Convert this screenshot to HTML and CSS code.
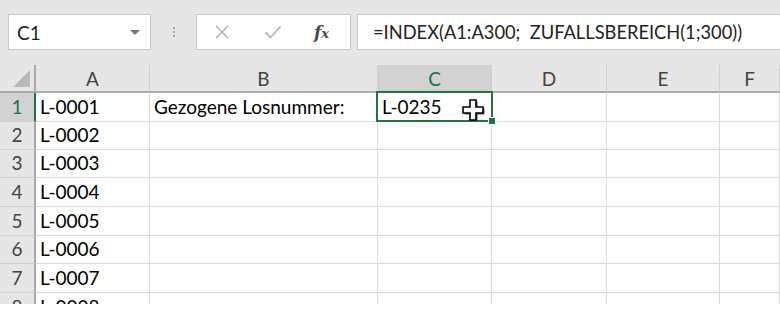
FILE: index.html
```html
<!DOCTYPE html>
<html lang="de">
<head>
    <meta charset="UTF-8">
    <title>Losnummer ziehen</title>
    <link rel="stylesheet" href="styles.css">
</head>
<body>
    <div class="formula-bar">
        <div class="name-box">
            <span>C1</span>
            <span class="dropdown"></span>
        </div>
        <div class="grip">
            <span></span><span></span><span></span>
        </div>
        <div class="fx-buttons">
            <svg class="icon" width="16" height="16" viewBox="0 0 16 16">
                <path d="M2 2 L14 14 M14 2 L2 14" stroke="#b3b3b3" stroke-width="1.6" fill="none"/>
            </svg>
            <svg class="icon" width="18" height="16" viewBox="0 0 18 16">
                <path d="M1.5 8.5 L6.5 13.5 L16.5 2.5" stroke="#b3b3b3" stroke-width="1.8" fill="none"/>
            </svg>
            <span class="fx">f<small>x</small></span>
        </div>
        <div class="formula-input">=INDEX(A1:A300;&nbsp; ZUFALLSBEREICH(1;300))</div>
    </div>

    <div class="sheet">
        <div class="corner"><span class="corner-tri"></span></div>
        <div class="col-head">A</div>
        <div class="col-head">B</div>
        <div class="col-head active">C</div>
        <div class="col-head">D</div>
        <div class="col-head">E</div>
        <div class="col-head">F</div>

        <div class="row-head active">1</div>
        <div class="cell">L-0001</div>
        <div class="cell">Gezogene Losnummer:</div>
        <div class="cell current">L-0235
            <div class="selection"><span class="fill-handle"></span></div>
            <svg class="cursor" width="26" height="26" viewBox="0 0 26 26">
                <path d="M10 3 H16 V10 H23 V16 H16 V23 H10 V16 H3 V10 H10 Z" fill="#555" transform="translate(1.5 1.5)"/>
                <path d="M10 3 H16 V10 H23 V16 H16 V23 H10 V16 H3 V10 H10 Z" fill="#fff" stroke="#000" stroke-width="1.6" stroke-linejoin="miter"/>
            </svg>
        </div>
        <div class="cell"></div>
        <div class="cell"></div>
        <div class="cell"></div>

        <div class="row-head">2</div>
        <div class="cell">L-0002</div>
        <div class="cell"></div><div class="cell"></div><div class="cell"></div><div class="cell"></div><div class="cell"></div>

        <div class="row-head">3</div>
        <div class="cell">L-0003</div>
        <div class="cell"></div><div class="cell"></div><div class="cell"></div><div class="cell"></div><div class="cell"></div>

        <div class="row-head">4</div>
        <div class="cell">L-0004</div>
        <div class="cell"></div><div class="cell"></div><div class="cell"></div><div class="cell"></div><div class="cell"></div>

        <div class="row-head">5</div>
        <div class="cell">L-0005</div>
        <div class="cell"></div><div class="cell"></div><div class="cell"></div><div class="cell"></div><div class="cell"></div>

        <div class="row-head">6</div>
        <div class="cell">L-0006</div>
        <div class="cell"></div><div class="cell"></div><div class="cell"></div><div class="cell"></div><div class="cell"></div>

        <div class="row-head">7</div>
        <div class="cell">L-0007</div>
        <div class="cell"></div><div class="cell"></div><div class="cell"></div><div class="cell"></div><div class="cell"></div>

        <div class="row-head">8</div>
        <div class="cell">L-0008</div>
        <div class="cell"></div><div class="cell"></div><div class="cell"></div><div class="cell"></div><div class="cell"></div>
    </div>
</body>
</html>
```

FILE: styles.css
```css
* {
    margin: 0;
    padding: 0;
    box-sizing: border-box;
}

body {
    background: #fff;
    font-family: Lato, "Open Sans", sans-serif;
    color: #000;
    width: 780px;
    overflow: hidden;
}

/* Formula bar */
.formula-bar {
    height: 65px;
    background: #e6e6e6;
    padding: 14px 0 0 8px;
    display: flex;
    align-items: flex-start;
}

.name-box {
    width: 143px;
    height: 36px;
    background: #fff;
    border: 1px solid #c6c6c6;
    display: flex;
    align-items: center;
    justify-content: space-between;
    padding: 0 10px 0 8px;
    font-size: 19px;
    color: #222;
}

.dropdown {
    width: 0;
    height: 0;
    border-left: 5px solid transparent;
    border-right: 5px solid transparent;
    border-top: 5px solid #777;
}

.grip {
    width: 45px;
    height: 36px;
    display: flex;
    flex-direction: column;
    align-items: center;
    justify-content: center;
    gap: 2px;
}

.grip span {
    width: 2px;
    height: 2px;
    background: #a6a6a6;
}

.fx-buttons {
    width: 155px;
    height: 36px;
    background: #fff;
    border: 1px solid #c6c6c6;
    display: flex;
    align-items: center;
    padding-left: 17px;
}

.fx-buttons .icon:nth-child(2) {
    margin-left: 34px;
}

.fx {
    margin-left: 32px;
    font-family: "DejaVu Serif", "Liberation Serif", serif;
    font-style: italic;
    font-weight: bold;
    font-size: 17px;
    color: #4a4a4a;
}

.fx small {
    font-size: 13px;
}

.formula-input {
    flex: 1;
    height: 36px;
    margin-left: 6px;
    background: #fff;
    border: 1px solid #c6c6c6;
    border-right: none;
    padding-left: 15px;
    display: flex;
    align-items: center;
    font-size: 18.3px;
    color: #222;
    white-space: nowrap;
}

/* Sheet */
.sheet {
    display: grid;
    grid-template-columns: 36px 114px 228px 114px 115px 113px 60px;
    grid-template-rows: 28px 29px 28px 28px 29px 29px 28px 29px 29px;
    height: 239px;
    overflow: hidden;
}

.corner,
.col-head,
.row-head {
    background: #e6e6e6;
    color: #444;
    font-size: 19px;
}

.corner {
    border-right: 2px solid #ababab;
    border-bottom: 2px solid #ababab;
    display: flex;
    align-items: flex-end;
    justify-content: flex-end;
    padding: 0 4px 4px 0;
}

.corner-tri {
    width: 0;
    height: 0;
    border-left: 17px solid transparent;
    border-bottom: 17px solid #b9b9b9;
}

.col-head {
    border-right: 1px solid #d0d0d0;
    border-bottom: 2px solid #ababab;
    display: flex;
    align-items: center;
    justify-content: center;
    padding-top: 1px;
}

.col-head.active {
    background: #d2d2d2;
    color: #217346;
    border-bottom-color: #217346;
}

.row-head {
    border-right: 2px solid #ababab;
    border-bottom: 1px solid #d0d0d0;
    display: flex;
    align-items: flex-end;
    justify-content: center;
    padding-bottom: 3px;
}

.row-head.active {
    background: #d2d2d2;
    color: #217346;
    border-right-color: #217346;
}

.cell {
    border-right: 1px solid #dadada;
    border-bottom: 1px solid #dadada;
    font-size: 19px;
    padding: 0 0 3px 4px;
    display: flex;
    align-items: flex-end;
    white-space: nowrap;
}

.cell.current {
    position: relative;
}

.selection {
    position: absolute;
    top: -2px;
    left: -2px;
    right: -2px;
    bottom: -1px;
    border: 2px solid #217346;
}

.fill-handle {
    position: absolute;
    right: -5px;
    bottom: -5px;
    width: 8px;
    height: 8px;
    background: #217346;
    border: 1px solid #fff;
}

.cursor {
    position: absolute;
    left: 82px;
    top: 4px;
}
```
